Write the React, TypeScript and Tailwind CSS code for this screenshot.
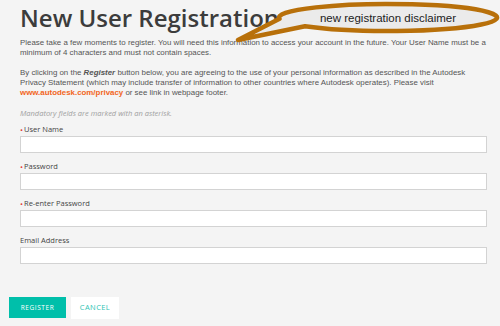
const fields = [
  { label: "User Name", required: true, type: "text" },
  { label: "Password", required: true, type: "password" },
  { label: "Re-enter Password", required: true, type: "password" },
  { label: "Email Address", required: false, type: "email" },
];

const Bubble = () => (
  <div className="absolute left-[230px] top-0 h-[46px] w-[270px]">
    <svg width="270" height="46" viewBox="0 0 270 46" className="absolute inset-0">
      <path
        d="M8 40 L49.5 18.8 A109 13.5 0 1 1 75 26.25 Z"
        fill="#ebebeb"
        stroke="#b8700a"
        strokeWidth="4.5"
        strokeLinejoin="round"
      />
    </svg>
    <span className="absolute left-0 right-[-46px] top-[11px] text-center font-['Liberation_Sans',sans-serif] text-[11.5px] leading-[14px] text-[#222]">
      new registration disclaimer
    </span>
  </div>
);

export default function App() {
  return (
    <div className="relative h-[326px] w-[500px] overflow-hidden bg-[#f4f4f4]">
      <div className="px-[20px] pt-[3px]">
        <h1 className="font-['Open_Sans',sans-serif] text-[24px] font-semibold leading-[30px] text-[#3c3c3c]">
          New User Registration
        </h1>

        <div className="mt-[5px] whitespace-nowrap font-['Liberation_Sans',sans-serif] text-[7.9px] leading-[10.3px] text-[#555]">
          <p>
            Please take a few moments to register. You will need this information to access your account in the future. Your User Name must be a
            <br />
            minimum of 4 characters and must not contain spaces.
          </p>
          <p className="mt-[9px]">
            By clicking on the <b className="italic">Register</b> button below, you are agreeing to the use of your personal information as described in the Autodesk
            <br />
            Privacy Statement (which may include transfer of information to other countries where Autodesk operates). Please visit
            <br />
            <a className="font-bold text-[#f26522]">www.autodesk.com/privacy</a> or see link in webpage footer.
          </p>
        </div>

        <p className="mt-[10px] font-['Open_Sans',sans-serif] text-[7.5px] italic text-[#a0a0a0]">
          Mandatory fields are marked with an asterisk.
        </p>

        <form className="mt-[4px] flex w-[467px] flex-col gap-[8px]">
          {fields.map((f) => (
            <label key={f.label} className="flex flex-col">
              <span className="flex items-center font-['Open_Sans',sans-serif] text-[7.5px] leading-[11px] text-[#444]">
                {f.required && <span className="mr-[1px] text-[8px] text-[#e2413a]">•</span>}
                {f.label}
              </span>
              <input
                type={f.type}
                className="mt-[1px] h-[17px] w-full border border-[#d3d3d3] bg-white outline-none"
              />
            </label>
          ))}
        </form>
      </div>

      <div className="mt-[33px] flex items-center gap-[5px] pl-[9px]">
        <button className="h-[21px] w-[57px] bg-[#00bfaa] font-['Open_Sans',sans-serif] text-[6.5px] tracking-[0.6px] text-white">
          REGISTER
        </button>
        <button className="h-[22px] w-[48px] bg-white font-['Open_Sans',sans-serif] text-[7.5px] tracking-[0.4px] text-[#30c4b4]">
          CANCEL
        </button>
      </div>

      <Bubble />
    </div>
  );
}
